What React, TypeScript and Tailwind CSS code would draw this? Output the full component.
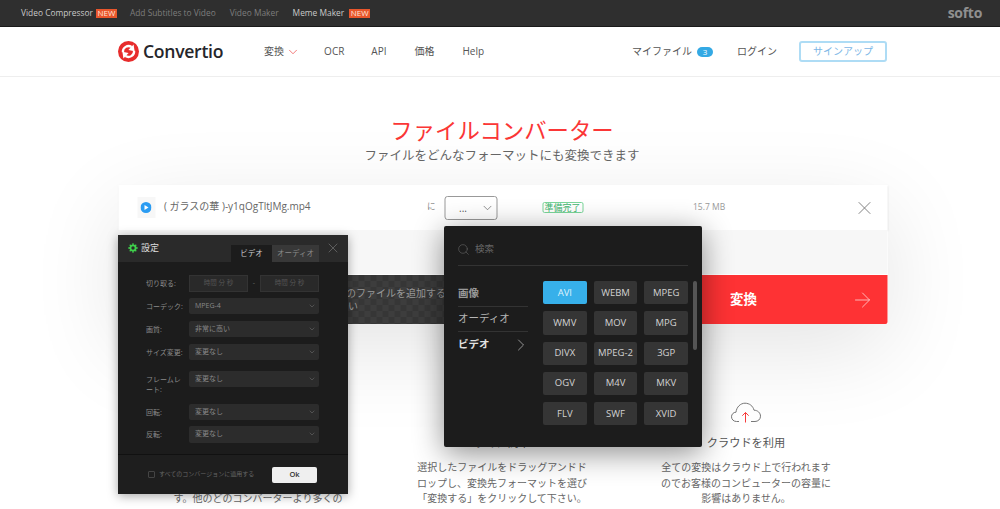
import { ChevronDown, ChevronRight, Search, X, ArrowRight } from "lucide-react";

const font = { fontFamily: '"Open Sans","Noto Sans CJK JP",sans-serif' };

function NewBadge() {
  return <span className="ml-[3px] flex h-[9px] w-[21px] items-center justify-center bg-[#e8562c] text-[8px] leading-none text-[#ffe3d8]">NEW</span>;
}

function Logo() {
  const arm = (
    <>
      <path d="M4.9 11.2A5.7 5.7 0 0 1 13.6 5.9" fill="none" stroke="#fff" strokeWidth="2.3" />
      <polygon points="15.6,3.4 16.6,10.2 10.4,9" fill="#fff" />
    </>
  );
  return (
    <svg width="21" height="21" viewBox="0 0 21 21" className="shrink-0">
      <circle cx="10.5" cy="10.5" r="10.5" fill="#e72c2c" />
      {arm}
      <g transform="rotate(180 10.5 10.5)">{arm}</g>
    </svg>
  );
}

function Gear() {
  return (
    <svg width="10" height="10" viewBox="0 0 10 10" className="ml-[10px] mt-[8px]">
      <circle cx="5" cy="5" r="2.6" fill="none" stroke="#3fd14c" strokeWidth="1.8" />
      <path d="M5 0.3V2M5 8V9.7M0.3 5H2M8 5H9.7M1.7 1.7L2.9 2.9M7.1 7.1L8.3 8.3M8.3 1.7L7.1 2.9M2.9 7.1L1.7 8.3" stroke="#3fd14c" strokeWidth="1.3" />
    </svg>
  );
}

function CloudIcon() {
  return (
    <svg width="32" height="22" viewBox="0 0 32 22" fill="none">
      <path d="M9 19.5H6.5C3.5 19.5 1.5 17.3 1.5 14.8C1.5 12.2 3.5 10.2 6 10.2C6.5 5 10.5 1.2 15 1.2C19.5 1.2 23 4 24 8.2C27.5 8.2 30.5 10.8 30.5 14.2C30.5 17.3 28 19.5 25 19.5H21" stroke="#777" strokeWidth="1" />
      <path d="M15.5 20.5V10.5M12.3 13.7L15.5 10.5L18.7 13.7" stroke="#f63b3b" strokeWidth="1" />
    </svg>
  );
}

function SelectRow({ label, value, labelClass = "", rowClass = "" }: { label: string; value: string; labelClass?: string; rowClass?: string }) {
  return (
    <div className={`flex items-start ${rowClass}`}>
      <div className={`w-[43px] pt-[4px] text-[7px] leading-[10px] text-[#8a8a8a] ${labelClass}`}>{label}</div>
      <div className="flex h-[16.5px] w-[130px] items-center justify-between rounded-[2px] bg-[#2c2c2c] pl-[6px] pr-[3px] text-[7px] text-[#888]">
        <span>{value}</span>
        <ChevronDown size={8} strokeWidth={1.5} color="#777" />
      </div>
    </div>
  );
}

const formats = ["AVI", "WEBM", "MPEG", "WMV", "MOV", "MPG", "DIVX", "MPEG-2", "3GP", "OGV", "M4V", "MKV", "FLV", "SWF", "XVID"];

export default function App() {
  return (
    <div style={font} className="relative h-[509px] w-[1000px] overflow-hidden bg-white">
      {/* promo bar */}
      <div className="flex h-[27px] items-center border-b border-[#1a1a1a] bg-[#2f2f2f] pl-[21px] pr-[18px] text-[8.4px] text-[#c9c9c9]">
        <span>Video Compressor</span>
        <NewBadge />
        <span className="ml-[13px] text-[#7d7d7d]">Add Subtitles to Video</span>
        <span className="ml-[14px] text-[#7d7d7d]">Video Maker</span>
        <span className="ml-[14px]">Meme Maker</span>
        <span className="ml-[2px]"><NewBadge /></span>
        <span className="ml-auto text-[14px] font-bold leading-none tracking-[-0.3px] text-[#8f8f8f]">softo</span>
      </div>

      {/* header */}
      <div className="flex h-[50px] items-center border-b border-[#eeeeee] bg-white pl-[118px] pr-[113px] text-[10px] text-[#555]">
        <Logo />
        <span className="ml-[4px] text-[17.6px] font-semibold leading-none tracking-[-0.3px] text-[#26262b]">Convertio</span>
        <span className="ml-[41px]">変換</span>
        <ChevronDown size={14} strokeWidth={1.2} color="#ee4444" className="ml-[2px]" />
        <span className="ml-[24px]">OCR</span>
        <span className="ml-[27px]">API</span>
        <span className="ml-[28px]">価格</span>
        <span className="ml-[28px]">Help</span>
        <span className="ml-auto">マイファイル</span>
        <span className="ml-[5px] flex h-[10px] w-[16px] items-center justify-center rounded-full bg-[#34a9e4] text-[8px] leading-none text-white">3</span>
        <span className="ml-[24px]">ログイン</span>
        <span className="ml-[22px] flex h-[21px] w-[88px] items-center justify-center rounded-[3px] border-2 border-[#aedcf5] text-[#7cb6e6]">サインアップ</span>
      </div>

      {/* hero */}
      <div className="flex flex-col items-center pl-[4px] pt-[40px]">
        <h1 className="text-[22.4px] font-normal leading-[28px] text-[#fb3636]">ファイルコンバーター</h1>
        <p className="mt-[2px] text-[12.5px] leading-[17px] text-[#666]">ファイルをどんなフォーマットにも変換できます</p>
      </div>

      {/* converter card */}
      <div className="mx-auto mt-[21px] w-[769px] translate-x-[2.5px] shadow-[0_25px_90px_rgba(0,0,0,0.11)]">
        <div className="flex h-[45px] items-center bg-white pl-[19px] pr-[12px] shadow-[0_1px_2px_rgba(0,0,0,0.1)]">
          <div className="flex h-[21px] w-[18px] items-center justify-center bg-[#f7f7f7]">
            <svg width="11" height="11" viewBox="0 0 11 11">
              <circle cx="5.5" cy="5.5" r="5.5" fill="#2b9cf2" />
              <path d="M4 3L8 5.5L4 8Z" fill="#fff" />
            </svg>
          </div>
          <span className="ml-[9px] w-[263px] pb-[2px] text-[10px] text-[#666]">( ガラスの華 )-y1qOgTltJMg.mp4</span>
          <span className="w-[17px] pb-[2px] text-[8.5px] text-[#888]">に</span>
          <div className="flex h-[24px] w-[53px] items-center justify-between rounded-[3px] border border-[#999] pl-[14px] pr-[2px] text-[10px] text-[#555]">
            <span className="leading-none">...</span>
            <ChevronDown size={14} strokeWidth={1.2} color="#666" />
          </div>
          <span className="ml-[45px] flex h-[11px] w-[41px] items-center justify-center rounded-[2px] border border-[#7ad69a] text-[9px] leading-none text-[#3fb56e]">準備完了</span>
          <span className="ml-[110px] text-[8.5px] text-[#999]">15.7 MB</span>
          <X size={22} strokeWidth={1} color="#777" className="ml-auto" />
        </div>
        <div className="h-[45px] border-b border-white bg-[#f7f7f7]" />
        <div className="flex h-[49px]">
          <div className="w-[560px] bg-[repeating-conic-gradient(#3d3d3d_0_25%,#363636_0_50%)] bg-[length:12px_12px] pl-[210px] pt-[12px] text-[10px] leading-[13px] text-[#9a9a9a]">
            <span className="pl-[8px]">他のファイルを追加する</span>
            <br />
            <span>下さい</span>
          </div>
          <div className="flex flex-1 items-center justify-between rounded-br-[2px] bg-[#fe3234] pl-[52px] pr-[13px]">
            <span className="text-[13.5px] font-bold text-white">変換</span>
            <ArrowRight size={24} strokeWidth={0.9} color="#ffc4c4" />
          </div>
        </div>
      </div>

      {/* feature columns */}
      <div className="mx-auto mt-[78px] grid w-[732px] translate-x-[2px] grid-cols-3 text-center text-[10px] leading-[15.7px] text-[#666]">
        <div className="pt-[89px]">す。他のどのコンバーターより多くの</div>
        <div>
          <div className="pt-[33px] text-[11.2px] leading-[16px] text-[#555]">すぐに簡単</div>
          <div className="mt-[9px]">選択したファイルをドラッグアンドド<br />ロップし、変換先フォーマットを選び<br />「変換する」をクリックして下さい。</div>
        </div>
        <div>
          <div className="flex h-[22px] justify-center"><CloudIcon /></div>
          <div className="mt-[11px] text-[11.2px] leading-[16px] text-[#555]">クラウドを利用</div>
          <div className="mt-[9px]">全ての変換はクラウド上で行われます<br />のでお客様のコンピューターの容量に<br />影響はありません。</div>
        </div>
      </div>

      {/* settings dialog */}
      <div className="absolute left-[118px] top-[235px] flex h-[259px] w-[230px] flex-col bg-[#1c1c1c] shadow-[0_2px_10px_rgba(0,0,0,0.35)]">
        <div className="flex h-[27px] items-start bg-[#2a2a2a]">
          <Gear />
          <span className="ml-[3px] mt-[6px] text-[9px] text-[#ddd]">設定</span>
          <span className="ml-[72px] mt-[10px] flex h-[17px] w-[41px] items-center justify-center bg-[#1c1c1c] text-[7.5px] text-[#ccc]">ビデオ</span>
          <span className="mt-[10px] flex h-[17px] w-[47px] items-center justify-center bg-[#383838] text-[7.5px] text-[#8a8a8a]">オーディオ</span>
          <X size={16} strokeWidth={1} color="#777" className="ml-[6px] mt-[5px]" />
        </div>
        <div className="flex-1 pl-[28px] pt-[13px]">
          <div className="flex items-start">
            <div className="w-[43px] pt-[4px] text-[7px] leading-[10px] text-[#8a8a8a]">切り取る:</div>
            <div className="flex h-[16.5px] w-[59px] items-center justify-center border border-[#333] bg-[#292929] text-[6.5px] text-[#555]">時間 分 秒</div>
            <span className="w-[12px] text-center text-[7px] leading-[16px] text-[#666]">-</span>
            <div className="flex h-[16.5px] w-[59px] items-center justify-center border border-[#333] bg-[#292929] text-[6.5px] text-[#555]">時間 分 秒</div>
          </div>
          <SelectRow label="コーデック:" value="MPEG-4" rowClass="mt-[6px]" />
          <SelectRow label="画質:" value="非常に高い" rowClass="mt-[6.5px]" />
          <SelectRow label="サイズ変更:" value="変更なし" rowClass="mt-[6.5px]" />
          <SelectRow label="フレームレート:" value="変更なし" rowClass="mt-[10.5px] h-[33px]" labelClass="pr-[7px]" />
          <SelectRow label="回転:" value="変更なし" />
          <SelectRow label="反転:" value="変更なし" rowClass="mt-[6px]" />
        </div>
        <div className="flex h-[40px] items-center border-t border-[#111] bg-[#1e1e1e] pl-[30px]">
          <span className="h-[7px] w-[7px] rounded-[1px] border border-[#444]" />
          <span className="ml-[4px] w-[109px] whitespace-nowrap text-[6px] text-[#666]">すべてのコンバージョンに適用する</span>
          <span className="ml-[4px] flex h-[16px] w-[45px] items-center justify-center rounded-[2px] bg-[#efefef] text-[7.5px] font-semibold text-[#333]">Ok</span>
        </div>
      </div>

      {/* format dropdown */}
      <div className="absolute left-[444px] top-[226px] h-[221px] w-[258px] rounded-[2px] bg-[#1c1c1c] pl-[14px] shadow-[0_6px_30px_rgba(0,0,0,0.45)]">
        <div className="flex h-[40px] w-[230px] items-center border-b border-[#333] pt-[7px]">
          <Search size={13} strokeWidth={0.9} color="#777" className="-ml-[1px]" />
          <span className="ml-[5px] text-[9.5px] text-[#666]">検索</span>
        </div>
        <div className="flex">
          <div className="mt-[16px] w-[70px] shrink-0 text-[10.5px] text-[#b5b5b5]">
            <div className="flex h-[25px] items-center border-b border-[#333] font-semibold text-[#999]">画像</div>
            <div className="flex h-[25px] items-center border-b border-[#333]">オーディオ</div>
            <div className="flex h-[25px] items-center justify-between font-semibold text-[#e2e2e2]">
              ビデオ
              <ChevronRight size={20} strokeWidth={1} color="#aaa" className="-mr-[2.5px]" />
            </div>
          </div>
          <div className="ml-[15px] mt-[15px] grid w-[145px] shrink-0 grid-cols-3 gap-x-[7px] gap-y-[7px]">
            {formats.map((f) => (
              <div key={f} className={`flex h-[23.3px] items-center justify-center rounded-[2px] text-[9.5px] font-medium ${f === "AVI" ? "bg-[#37b0ea] text-[#dff2fc]" : "bg-[#353535] text-[#d2d2d2]"}`}>
                {f}
              </div>
            ))}
          </div>
          <div className="ml-[5px] mt-[15px] h-[69px] w-[3.5px] shrink-0 rounded-full bg-[#555]" />
        </div>
      </div>
    </div>
  );
}
